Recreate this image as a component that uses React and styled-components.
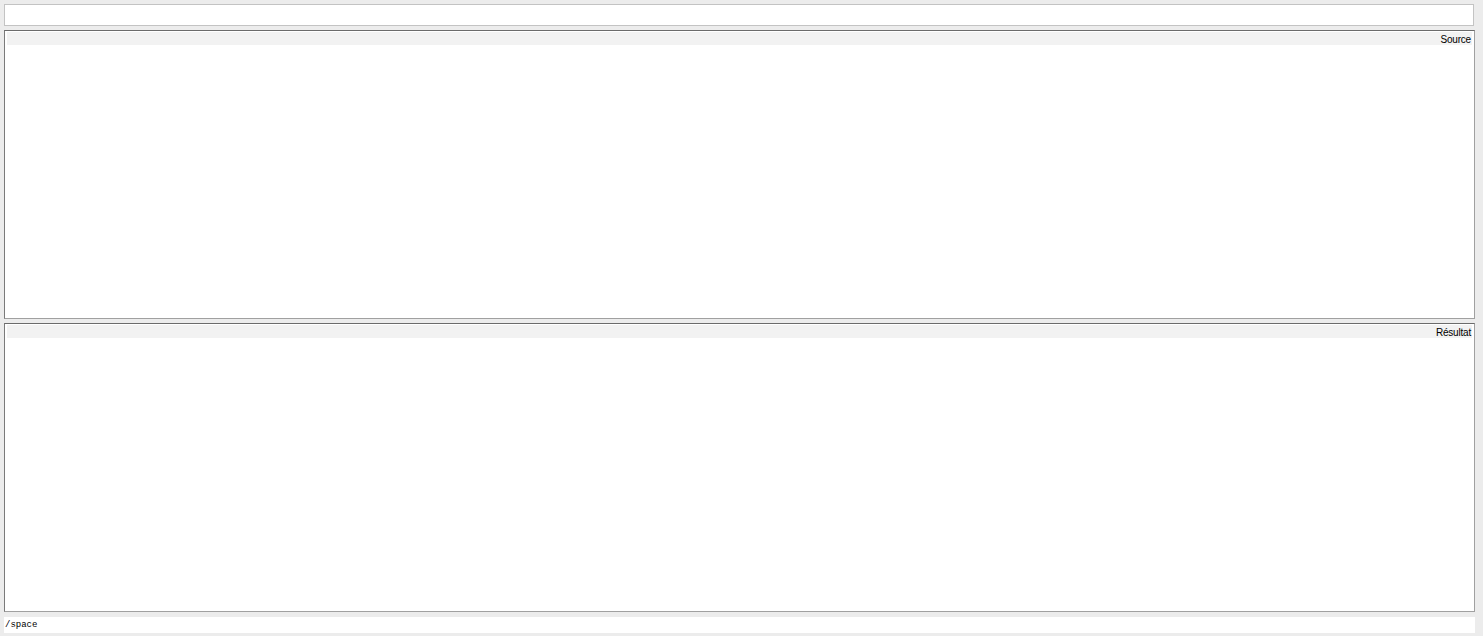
import React from 'react';
import styled, { createGlobalStyle } from 'styled-components';

const GlobalStyle = createGlobalStyle`
  html, body {
    margin: 0;
    padding: 0;
    background: #ececec;
    height: 100%;
  }
  #root {
    height: 100%;
  }
`;

const Window = styled.div`
  box-sizing: border-box;
  height: 636px;
  padding: 4px 8px 3px 4px;
  display: flex;
  flex-direction: column;
  font-family: "Liberation Sans", Arial, sans-serif;
`;

const CommandInput = styled.input`
  box-sizing: border-box;
  width: 1470px;
  height: 22px;
  margin: 0 0 4px 0;
  padding: 0 3px;
  border: 1px solid #c3c3c3;
  background: #fff;
  outline: none;
  font-size: 11px;
`;

const Panel = styled.div`
  box-sizing: border-box;
  height: 289px;
  margin-bottom: ${(p) => p.gap}px;
  border: 1px solid #a0a0a0;
  border-top-color: #6b6b6b;
  border-left-color: #7a7a7a;
  background: #fff;
  padding: 1px 2px 0 2px;
  display: flex;
  flex-direction: column;
`;

const PanelHeader = styled.div`
  box-sizing: border-box;
  height: 13px;
  background: #f2f2f2;
  display: flex;
  justify-content: flex-end;
  align-items: center;
  font-size: 10px;
  letter-spacing: -0.2px;
  color: #000;
  padding: 2px 1px 0 0;
`;

const PanelBody = styled.div`
  flex: 1;
`;

const StatusBar = styled.div`
  box-sizing: border-box;
  width: 1471px;
  height: 16px;
  background: #fff;
  display: flex;
  align-items: center;
  padding-left: 1px;
  font-family: "Liberation Mono", "DejaVu Sans Mono", monospace;
  font-size: 9px;
  color: #000;
`;

export default function App() {
  return (
    <>
      <GlobalStyle />
      <Window>
        <CommandInput type="text" />
        <Panel gap={4}>
          <PanelHeader>Source</PanelHeader>
          <PanelBody />
        </Panel>
        <Panel gap={5}>
          <PanelHeader>Résultat</PanelHeader>
          <PanelBody />
        </Panel>
        <StatusBar>/space</StatusBar>
      </Window>
    </>
  );
}
